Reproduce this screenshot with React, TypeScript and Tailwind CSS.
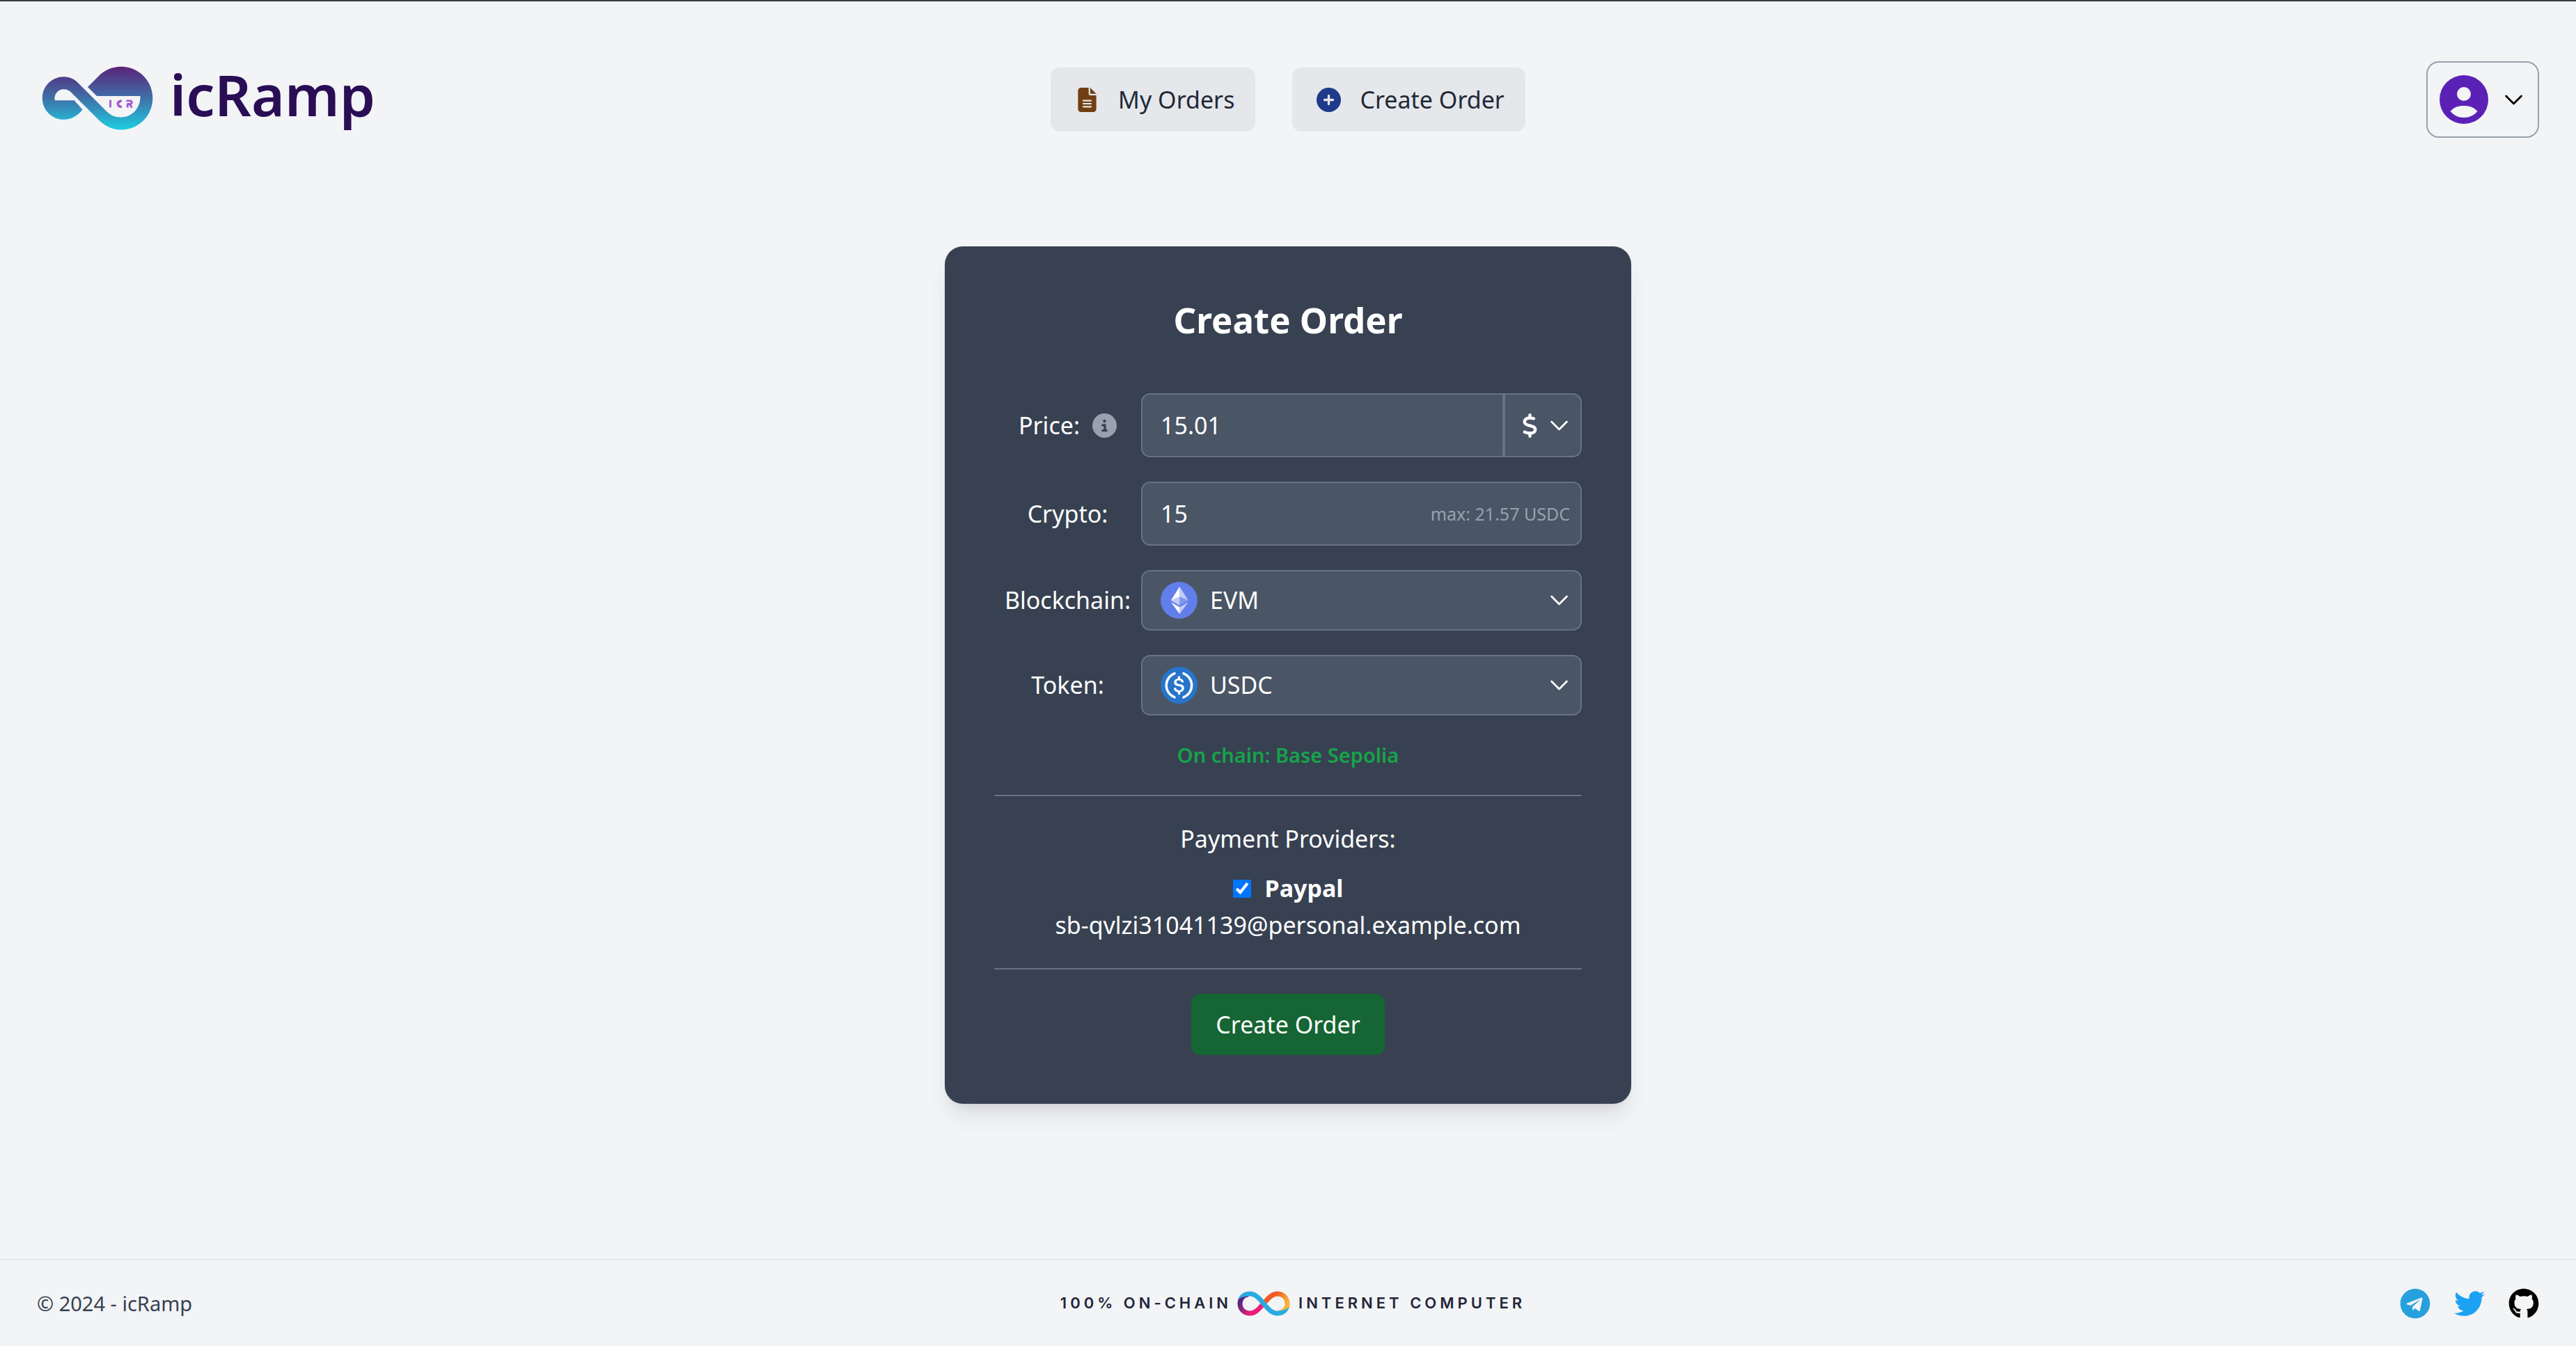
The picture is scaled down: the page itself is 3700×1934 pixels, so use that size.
import { FaTwitter, FaTelegram, FaGithub } from 'react-icons/fa';
import { FaFileLines, FaCirclePlus, FaCircleInfo, FaDollarSign } from 'react-icons/fa6';

const chevron = 'm19.5 8.25-7.5 7.5-7.5-7.5';

function Chevron({ className }: { className: string }) {
  return (
    <svg viewBox="0 0 24 24" fill="none" stroke="currentColor" strokeWidth="1.9" className={className} aria-hidden="true">
      <path d={chevron} strokeLinecap="round" strokeLinejoin="round" />
    </svg>
  );
}

function LogoMark() {
  return (
    <svg viewBox="0 0 160 92" className="h-[92px] w-[160px] shrink-0" aria-hidden="true">
      <defs>
        <linearGradient id="mark" x1="0" y1="0" x2="0" y2="92" gradientUnits="userSpaceOnUse">
          <stop offset="0" stopColor="#5b2178" />
          <stop offset="0.5" stopColor="#3f70a8" />
          <stop offset="1" stopColor="#1dcfe2" />
        </linearGradient>
        <linearGradient id="letters" x1="0" y1="48" x2="6" y2="60" gradientUnits="userSpaceOnUse">
          <stop offset="0" stopColor="#4a35a8" />
          <stop offset="1" stopColor="#a259d0" />
        </linearGradient>
      </defs>
      <path
        fill="url(#mark)"
        d="M58.500 62.500 L46.700 49.300 H18.800 C17 41 23 33.300 31.500 33.300 C36 33.300 39.500 35 42.500 38 L82 77.500 C90 85.500 101 91.500 114 91.500 C139 91.500 159.300 71 159.300 46 C159.300 21 139 0.800 114 0.800 C101.500 0.800 90 6 82 14 L66 30 L79 43 H141.500 C142 60 130 73.500 113.500 73.500 C105 73.500 99 70.500 93.500 65.500 L53.500 25.500 C47.500 19 40.500 15.300 31.500 15.300 C14.500 15.300 0.800 29 0.800 46 C0.800 63 14.500 76.800 31.500 76.800 C42.500 76.800 51.500 71.500 58.500 62.500 Z"
      />
      <g fill="none" stroke="url(#letters)" strokeWidth="2.800">
        <path d="M98.500 48.500V59.500" />
        <path d="M114.800 50.500A4 4 0 1 0 114.800 58" strokeWidth="3.600" />
        <path d="M121.500 49.900H127A2.300 2.300 0 0 1 127 54.500H123.500M123.200 53.500V59.500M126.500 55L129.500 59.800" />
      </g>
    </svg>
  );
}

function EthIcon() {
  return (
    <svg viewBox="0 0 32 32" className="size-[53px] shrink-0" aria-hidden="true">
      <circle cx="16" cy="16" r="16" fill="#627eea" />
      <g fill="#fff">
        <path fillOpacity=".602" d="M16.498 4v8.870l7.497 3.350z" />
        <path d="M16.498 4L9 16.220l7.498-3.350z" />
        <path fillOpacity=".602" d="M16.498 21.968v6.027L24 17.616z" />
        <path d="M16.498 27.995v-6.028L9 17.616z" />
        <path fillOpacity=".2" d="M16.498 20.573l7.497-4.353-7.497-3.348z" />
        <path fillOpacity=".602" d="M9 16.220l7.498 4.353v-7.701z" />
      </g>
    </svg>
  );
}

function UsdcIcon() {
  return (
    <svg viewBox="0 0 2000 2000" className="size-[53px] shrink-0" aria-hidden="true">
      <circle cx="1000" cy="1000" r="1000" fill="#2775ca" />
      <g fill="#fff">
        <path d="M1275 1158.330c0-145.830-87.500-195.830-262.500-216.660-125-16.670-150-50-150-108.340s41.670-95.830 125-95.830c75 0 116.670 25 137.500 87.500 4.170 12.500 16.670 20.830 29.170 20.830h66.660c16.670 0 29.170-12.500 29.170-29.160v-4.170c-16.670-91.670-91.670-162.500-187.500-170.830v-100c0-16.670-12.500-29.170-33.330-33.340h-62.500c-16.670 0-29.170 12.500-33.340 33.340v95.830c-125 16.670-204.160 100-204.160 204.170 0 137.500 83.330 191.660 258.330 212.500 116.670 20.830 154.170 45.830 154.170 112.500s-58.340 112.500-137.500 112.500c-108.340 0-145.840-45.840-158.340-108.340-4.160-16.660-16.660-25-29.160-25h-70.840c-16.660 0-29.160 12.500-29.160 29.170v4.170c16.660 104.160 83.330 179.160 220.830 200v100c0 16.660 12.500 29.160 33.330 33.330h62.500c16.670 0 29.170-12.500 33.340-33.330v-100c125-20.840 208.330-108.340 208.330-220.840z" />
        <path d="M787.500 1595.830c-325-116.660-491.670-479.160-370.830-800 62.500-175 200-308.330 370.830-370.830 16.670-8.330 25-20.830 25-41.670V325c0-16.670-8.330-29.170-25-33.330-4.170 0-12.500 0-16.670 4.160-395.830 125-612.500 545.840-487.500 941.670 75 233.330 254.170 412.500 487.500 487.500 16.670 8.330 33.340 0 37.500-16.670 4.170-4.160 4.170-8.330 4.170-16.660v-58.340c0-12.500-12.500-29.160-25-37.500zM1229.170 295.830c-16.670-8.330-33.340 0-37.500 16.670-4.170 4.170-4.170 8.330-4.170 16.670v58.330c0 16.670 12.500 33.330 25 41.670 325 116.660 491.670 479.160 370.830 800-62.500 175-200 308.330-370.830 370.830-16.670 8.330-25 20.830-25 41.670V1700c0 16.670 8.330 29.170 25 33.330 4.170 0 12.500 0 16.670-4.160 395.830-125 612.500-545.840 487.500-941.670-75-237.500-258.340-416.670-487.500-491.670z" />
      </g>
    </svg>
  );
}

function InfinityMark() {
  return (
    <svg viewBox="0 0 76 36" className="h-[36px] w-[76px]" aria-hidden="true">
      <defs>
        <linearGradient id="orange" x1="42" y1="6" x2="74" y2="26" gradientUnits="userSpaceOnUse">
          <stop offset="0.3" stopColor="#f15a24" />
          <stop offset="0.8" stopColor="#fbb03b" />
        </linearGradient>
        <linearGradient id="pink" x1="34" y1="30" x2="4" y2="8" gradientUnits="userSpaceOnUse">
          <stop offset="0.3" stopColor="#ed1e79" />
          <stop offset="0.9" stopColor="#522785" />
        </linearGradient>
      </defs>
      <g fill="none" strokeWidth="7">
        <path d="M38 18C45 10 50 4 57.500 4C66 4 72 10 72 18C72 25 67 30.500 60 31" stroke="url(#orange)" />
        <path d="M38 18C31 26 26 32 18.500 32C10 32 4 26 4 18C4 11 9 5.500 16 5" stroke="url(#pink)" />
      </g>
      <path
        d="M1 13C3.500 5 10 0.500 18.500 0.500C36 0.500 44 28.500 57.500 28.500C64 28.500 70 27 75 23C72.500 31 66 35.500 57.500 35.500C40 35.500 32 7.500 18.500 7.500C12 7.500 6 8 1 13Z"
        fill="#29abe2"
      />
    </svg>
  );
}

const field = 'flex items-center rounded-[13px] border-2 border-gray-500 bg-gray-600';
const label = 'flex w-[211px] shrink-0 items-center justify-center gap-[18px]';
const navButton = 'flex h-[92px] items-center gap-[27px] rounded-[13px] bg-gray-200 pr-[30px] pl-[35px]';

export default function App() {
  return (
    <div className="flex min-h-screen flex-col border-t-2 border-[#3a3b3d] bg-[#f3f4f6] font-['Noto_Sans',sans-serif] text-[34px] leading-[53px] text-[#1f2937]">
      <header className="grid grid-cols-3 items-center px-[53px] pt-[86px]">
        <a href="#home" className="flex items-center gap-[24px] pb-[5px] pl-[7px] text-[#290d55]">
          <LogoMark />
          <span className="pb-[12px] text-[82px] leading-[92px] font-semibold">icRamp</span>
        </a>
        <nav className="flex justify-center gap-[53px]">
          <button type="button" className={navButton}>
            <FaFileLines className="size-[35px] text-[#713f12]" />
            My Orders
          </button>
          <button type="button" className={navButton}>
            <FaCirclePlus className="size-[35px] text-[#1e3a8a]" />
            Create Order
          </button>
        </nav>
        <button type="button" aria-label="Account menu" className="flex h-[110px] w-[162px] items-center justify-between justify-self-end rounded-[18px] border-2 border-gray-400 px-[17px] text-black">
          <svg viewBox="0 0 70 70" className="size-[70px]" aria-hidden="true">
            <circle cx="35" cy="35" r="35" fill="#5b21b6" />
            <circle cx="35" cy="27" r="10" fill="#f3f4f6" />
            <path d="M15.500 52C21 46 26 44 35 44C44 44 49 46 54.500 52C49 58 43 61 35 61C27 61 21 58 15.500 52Z" fill="#f3f4f6" />
          </svg>
          <Chevron className="size-[35px]" />
        </button>
      </header>

      <main className="flex grow flex-col items-center pt-[156px]">
        <form className="w-full max-w-[986px] rounded-[26px] bg-[#374151] px-[71px] py-[70px] text-white shadow-[0_22px_33px_-7px_rgba(0,0,0,0.1),0_9px_13px_-9px_rgba(0,0,0,0.1)]">
          <h1 className="mb-[70px] text-center text-[51px] leading-[71px] font-bold">Create Order</h1>
          <div className="flex flex-col gap-[35px]">
            <div className="flex items-center">
              <label htmlFor="price" className={label}>
                Price:
                <FaCircleInfo className="size-[35px] text-gray-400" />
              </label>
              <div className={`${field} h-[92px] min-w-0 grow`}>
                <input id="price" defaultValue="15.01" className="h-full min-w-0 grow bg-transparent px-[26px] outline-none" />
                <button type="button" aria-label="Currency" className="flex h-full w-[115px] items-center justify-between border-l-4 border-gray-500 pr-[13px] pl-[18px]">
                  <FaDollarSign className="size-[35px]" />
                  <Chevron className="size-[35px]" />
                </button>
              </div>
            </div>
            <div className="flex items-center">
              <label htmlFor="crypto" className={label}>Crypto:</label>
              <div className={`${field} h-[92px] min-w-0 grow`}>
                <input id="crypto" defaultValue="15" className="h-full min-w-0 grow bg-transparent px-[26px] outline-none" />
                <span className="shrink-0 pr-[15px] text-[25px] text-gray-400">max: 21.57 USDC</span>
              </div>
            </div>
            <div className="flex items-center">
              <span id="chain-label" className={label}>Blockchain:</span>
              <button type="button" aria-labelledby="chain-label chain-value" className={`${field} h-[87px] min-w-0 grow gap-[18px] pr-[13px] pl-[26px]`}>
                <EthIcon />
                <span id="chain-value" className="grow text-left">EVM</span>
                <Chevron className="size-[35px]" />
              </button>
            </div>
            <div className="flex items-center">
              <span id="token-label" className={label}>Token:</span>
              <button type="button" aria-labelledby="token-label token-value" className={`${field} h-[87px] min-w-0 grow gap-[18px] pr-[13px] pl-[26px]`}>
                <UsdcIcon />
                <span id="token-value" className="grow text-left">USDC</span>
                <Chevron className="size-[35px]" />
              </button>
            </div>
          </div>
          <p className="mt-[35px] text-center text-[29px] leading-[44px] font-semibold text-[#16a34a]">On chain: Base Sepolia</p>
          <hr className="my-[35px] border-t-2 border-gray-500" />
          <fieldset className="flex flex-col items-center">
            <legend className="mx-auto mb-[18px]">Payment Providers:</legend>
            <label className="flex items-center gap-[20px] font-bold">
              <input type="checkbox" defaultChecked className="size-[26px] accent-[#0075ff]" />
              Paypal
            </label>
            <span>sb-qvlzi31041139@personal.example.com</span>
          </fieldset>
          <hr className="my-[35px] border-t-2 border-gray-500" />
          <button type="submit" className="mx-auto block h-[88px] rounded-[13px] bg-[#166534] px-[35px]">Create Order</button>
        </form>
      </main>

      <footer className="grid h-[125px] grid-cols-3 items-center border-t-2 border-gray-200 px-[53px] text-[29px] text-[#374151]">
        <span>© 2024 - icRamp</span>
        <div className="flex items-center justify-center gap-[8px] pl-[14px] font-['Inter',sans-serif] text-[22px] font-semibold tracking-[5px] text-[#23253b]">
          <span>100% ON-CHAIN</span>
          <InfinityMark />
          <span className="pl-[4px]">INTERNET COMPUTER</span>
        </div>
        <div className="flex items-center justify-end gap-[34px]">
          <a href="#telegram" aria-label="Telegram"><FaTelegram className="size-[44px] text-[#26a1de]" /></a>
          <a href="#twitter" aria-label="Twitter"><FaTwitter className="size-[44px] text-[#1da1f2]" /></a>
          <a href="#github" aria-label="GitHub"><FaGithub className="size-[44px] text-black" /></a>
        </div>
      </footer>
    </div>
  );
}
